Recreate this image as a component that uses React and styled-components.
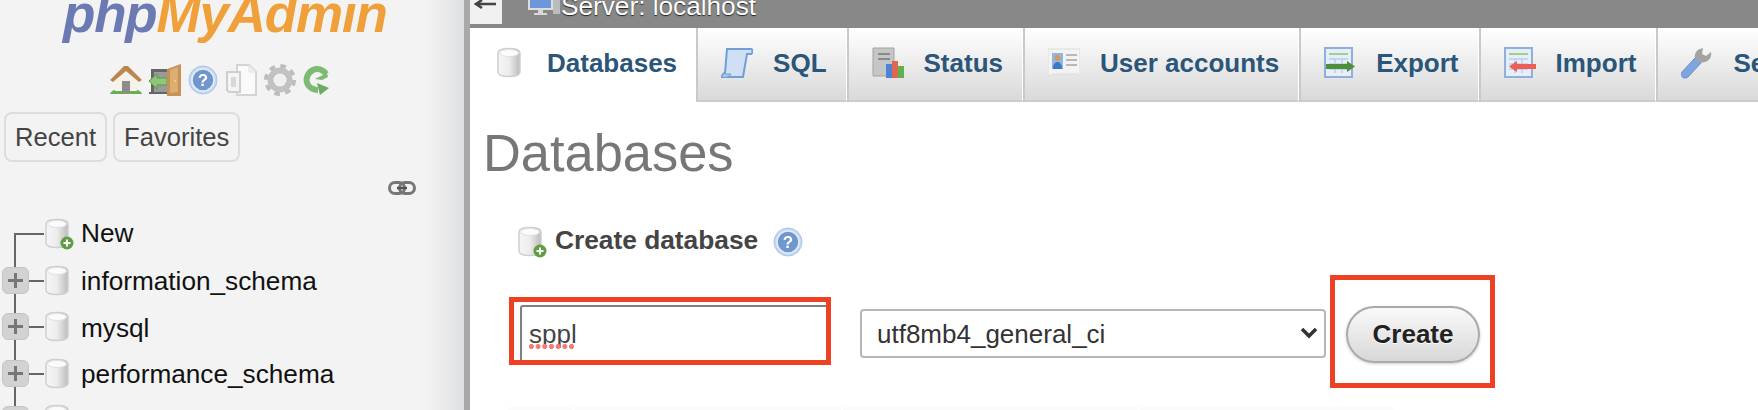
import React from 'react';
import styled, { createGlobalStyle } from 'styled-components';

const GlobalStyle = createGlobalStyle`
    html, body {
        margin: 0;
        padding: 0;
        background: #fff;
    }
    body {
        font-family: "Liberation Sans", Arial, sans-serif;
    }
    * {
        box-sizing: border-box;
    }
`;

const Page = styled.div`
    display: flex;
    width: 1758px;
    height: 410px;
    overflow: hidden;
`;

// left navigation panel
const Sidebar = styled.aside`
    flex: 0 0 470px;
    height: 410px;
    overflow: hidden;
    border-right: 6px solid #a9a9a9;
    background: linear-gradient(to right, #f3f3f3 0, #f3f3f3 425px, #dfe0e1 464px);
`;

const Logo = styled.div`
    margin: -17px 0 0 63px;
    height: 61px;
    font-size: 53px;
    line-height: 61px;
    font-style: italic;
    font-weight: 700;
    letter-spacing: -1.2px;
    white-space: nowrap;
    color: #f0a03a;
    span {
        color: #6c7ab3;
    }
`;

const IconRow = styled.div`
    display: flex;
    align-items: center;
    height: 32px;
    margin: 20px 0 0 110px;
    gap: 7px;
`;

const Blurred = styled.svg`
    display: block;
    flex: none;
    filter: blur(0.45px);
`;

const TabRow = styled.div`
    display: flex;
    gap: 6px;
    margin: 16px 0 0 4px;
`;

const NavButton = styled.div`
    height: 50px;
    padding: 0 9px;
    font-size: 25.6px;
    line-height: 46px;
    color: #444;
    border: 2px solid #ddd;
    border-radius: 8px;
`;

const LinkRow = styled.div`
    display: flex;
    justify-content: flex-end;
    margin: 19px 48px 0 0;
    height: 14px;
`;

const Tree = styled.div`
    margin-top: 16px;
`;

const TreeRow = styled.div`
    display: flex;
    align-items: center;
    height: 46.5px;
    font-size: 26.2px;
    color: #111;
`;

const Connector = styled.div`
    position: relative;
    flex: 0 0 44px;
    height: 100%;
    &::before {
        content: "";
        position: absolute;
        left: 14px;
        width: 2px;
        top: ${p => (p.$first ? '50%' : '0')};
        bottom: 0;
        background: #666;
    }
    &::after {
        content: "";
        position: absolute;
        left: 14px;
        right: 0;
        top: calc(50% - 1px);
        height: 2px;
        background: #666;
    }
`;

const PlusBox = styled.div`
    position: absolute;
    z-index: 1;
    left: 2px;
    top: 50%;
    width: 27px;
    height: 27px;
    margin-top: -14px;
    border: 1px solid #c4c4c4;
    border-radius: 6px;
    background: #d2d2d2;
    filter: blur(0.4px);
    &::before, &::after {
        content: "";
        position: absolute;
        background: #777;
    }
    &::before {
        left: 5px;
        right: 5px;
        top: 11px;
        height: 3px;
    }
    &::after {
        top: 5px;
        bottom: 5px;
        left: 11px;
        width: 3px;
    }
`;

const TreeLabel = styled.span`
    margin-left: 7px;
    position: relative;
    top: ${p => (p.$first ? '-1px' : '1px')};
`;

// right hand side
const Main = styled.main`
    position: relative;
    flex: 1;
    min-width: 0;
    height: 410px;
    overflow: hidden;
`;

const TopBar = styled.div`
    display: flex;
    height: 28px;
    background: #888;
    overflow: hidden;
`;

const BackButton = styled.div`
    display: flex;
    align-items: flex-start;
    justify-content: center;
    width: 32px;
    height: 24px;
    background: #f1f1f1;
`;

const ServerLabel = styled.div`
    display: flex;
    margin-left: 26px;
    height: 28px;
    font-size: 26.2px;
    line-height: 28px;
    color: #fff;
    text-shadow: 0 1px 1px #222;
    span {
        position: relative;
        top: -8px;
        margin-left: 1px;
    }
`;

const Tabs = styled.nav`
    display: flex;
    height: 74px;
    white-space: nowrap;
`;

const Tab = styled.div`
    display: flex;
    flex: none;
    align-items: center;
    height: 74px;
    padding: 0 ${p => (p.$active ? '18px' : '19px')} 2px 23px;
    font-size: 26px;
    font-weight: 700;
    color: #2b5579;
    border-left: 2px solid ${p => (p.$active ? '#fff' : '#c9c9c9')};
    border-right: 1px solid #fff;
    border-bottom: 2px solid ${p => (p.$active ? '#fff' : '#cbcbcb')};
    background: ${p => (p.$active ? '#fff' : 'linear-gradient(to bottom, #fff, #d9d9d9)')};
`;

const TabIcon = styled.div`
    display: flex;
    justify-content: ${p => (p.$center ? 'center' : 'flex-start')};
    width: 32px;
    margin-right: 20px;
`;

const Heading = styled.h1`
    margin: 21px 0 0 13px;
    height: 60px;
    font-size: 52.4px;
    line-height: 60px;
    font-weight: 400;
    color: #777;
`;

const Section = styled.section`
    margin: 0 0 0 47px;
    padding-top: 42px;
`;

const SectionTitle = styled.div`
    display: flex;
    align-items: center;
    height: 34px;
    font-size: 26.3px;
    font-weight: 700;
    color: #444;
`;

const TitleText = styled.span`
    margin: 0 15px 0 8px;
    position: relative;
    top: -2px;
`;

const FormRow = styled.form`
    display: flex;
    align-items: center;
    height: 59px;
    margin: 45px 0 0 3px;
`;

const InputWrap = styled.div`
    position: relative;
    flex: 0 0 309px;
    margin-right: 31px;
`;

const NameInput = styled.input`
    display: block;
    width: 100%;
    height: 58px;
    padding: 0 7px;
    font: 26px "Liberation Sans", Arial, sans-serif;
    color: #444;
    background: #fff;
    border: 0;
    border-top: 2px solid #808080;
    border-left: 2px solid #808080;
    border-radius: 3px 0 0 3px;
    outline: none;
`;

const SpellDots = styled.span`
    position: absolute;
    left: 9px;
    top: 39px;
    width: 46px;
    height: 5px;
    background: radial-gradient(circle at 2.5px 2.5px, #f77a70 2.3px, transparent 2.6px) 0 0 / 6.7px 5px repeat-x;
`;

const SelectWrap = styled.div`
    position: relative;
    flex: 0 0 466px;
    margin-right: 20px;
`;

const Collation = styled.select`
    display: block;
    width: 100%;
    height: 49px;
    padding: 0 40px 0 15px;
    font: 26px "Liberation Sans", Arial, sans-serif;
    color: #333;
    background: #fff;
    border: 2px solid #b7b7b7;
    border-radius: 4px;
    appearance: none;
`;

const Chevron = styled.svg`
    position: absolute;
    right: 8px;
    top: 18px;
    pointer-events: none;
`;

const CreateButton = styled.button`
    flex: 0 0 134px;
    height: 57px;
    margin-top: 2px;
    padding: 0;
    font: 700 26px "Liberation Sans", Arial, sans-serif;
    color: #222;
    text-shadow: 0 1px 0 #fff;
    border: 2px solid #aaa;
    border-radius: 29px;
    background: linear-gradient(to bottom, #f9f9f9, #d8d8d8);
    box-shadow: 0 1px 3px #ccc;
`;

// red annotation frames drawn on top of the screenshot
const Frame = styled.div`
    position: absolute;
    left: ${p => p.$left}px;
    top: ${p => p.$top}px;
    width: ${p => p.$width}px;
    height: ${p => p.$height}px;
    border: 5px solid #ee4023;
`;

const TableHeadRow = styled.div`
    position: absolute;
    left: 38px;
    bottom: 0;
    display: flex;
    gap: 2px;
    height: 3px;
`;

const TableHeadCell = styled.div`
    width: ${p => p.$width}px;
    background: #fbfbfb;
`;

const Gradients = () => (
    <svg width="0" height="0" style={{ position: 'absolute' }}>
        <defs>
            <linearGradient id="dbBody" x1="0" x2="1" y1="0" y2="0">
                <stop offset="0" stopColor="#f6f6f6" />
                <stop offset="0.5" stopColor="#ececec" />
                <stop offset="1" stopColor="#bcbcbc" />
            </linearGradient>
        </defs>
    </svg>
);

const DbIcon = ({ badge }) => (
    <Blurred width="30" height="32" viewBox="0 0 30 32">
        <path d="M2 6c0-3 5-4.500 11-4.500S24 3 24 6v19c0 3-5 4.500-11 4.500S2 28 2 25z" fill="url(#dbBody)" stroke="#cfcfcf" strokeWidth="1.500" />
        <ellipse cx="13" cy="6" rx="9.500" ry="3.500" fill="#fbfbfb" stroke="#e0e0e0" />
        {badge && (
            <>
                <circle cx="23" cy="25" r="6.500" fill="#5f9e45" />
                <path d="M23 21.500v7M19.500 25h7" stroke="#fff" strokeWidth="2" />
            </>
        )}
    </Blurred>
);

const HomeIcon = () => (
    <Blurred width="32" height="32" viewBox="0 0 32 32">
        <path d="M0 30c2-5 8-5 16-5s14 0 16 5z" fill="#69ad55" />
        <path d="M5 14 16 5l11 9v13H5z" fill="#f6f2ea" />
        <path d="M12 17h8v12h-8z" fill="#8c8c8c" />
        <path d="M0 16 14 2h4l14 14-3 2L16 7 3 18z" fill="#bb8550" />
    </Blurred>
);

const ExitIcon = () => (
    <Blurred width="32" height="32" viewBox="0 0 32 32">
        <path d="M2 5h18v25H0v-2h2z" fill="#666" />
        <path d="M5 8h15v20H5z" fill="#9a9a9a" />
        <path d="M0 17 8 10v4h10v7H8v4z" fill="#8cc878" stroke="#5c9a4a" />
        <path d="M18 5l14-5v32H18z" fill="#c69257" />
        <path d="M21 6l8-3v25l-8 1z" fill="#dcae73" />
        <circle cx="26" cy="17" r="1.200" fill="#f2d050" />
    </Blurred>
);

const HelpIcon = ({ size = 30 }) => (
    <Blurred width={size} height={size} viewBox="0 0 30 30">
        <circle cx="15" cy="15" r="14" fill="#c6d9f2" stroke="#a9c3e8" />
        <circle cx="15" cy="15" r="11" fill="#6f97cd" stroke="#e4edf8" strokeWidth="1.500" />
        <text x="15" y="21" textAnchor="middle" fontSize="17" fontWeight="700" fill="#fff" fontFamily="Liberation Sans">?</text>
    </Blurred>
);

const DocsIcon = () => (
    <Blurred width="32" height="32" viewBox="0 0 32 32">
        <path d="M12 1h12l7 7v23H12z" fill="#fafafa" stroke="#d4d4d4" strokeWidth="2" />
        <path d="M24 1v7h7" fill="#eee" stroke="#e2e2e2" />
        <path d="M2 8h13v20H4l-2-2z" fill="#f4f4f4" stroke="#cfcfcf" strokeWidth="2" />
        <path d="M6 13h5v10H6z" fill="#d8d8d8" />
    </Blurred>
);

const GearIcon = () => (
    <Blurred width="32" height="32" viewBox="0 0 32 32">
        <circle cx="16" cy="16" r="13" fill="none" stroke="#bdbdbd" strokeWidth="6" strokeDasharray="5.200 5" />
        <circle cx="16" cy="16" r="9.500" fill="none" stroke="#c2c2c2" strokeWidth="6" />
        <circle cx="16" cy="16" r="5" fill="#efefef" />
    </Blurred>
);

const ReloadIcon = () => (
    <Blurred width="27" height="32" viewBox="0 0 27 32">
        <path d="M23 10C20 5 14 4 10 6 4 9 2 16 5 21c3 4 7 5 10 5" fill="none" stroke="#7dbb72" strokeWidth="6" />
        <path d="M14 19l12 5-9 7z" fill="#6dab62" />
        <path d="M12 15l12-6 1 4-6 3z" fill="#7dbb72" />
    </Blurred>
);

const LinkIcon = () => (
    <Blurred width="28" height="14" viewBox="0 0 28 14">
        <rect x="1.500" y="1.500" width="15" height="11" rx="5.500" fill="none" stroke="#777" strokeWidth="3" />
        <rect x="11.500" y="1.500" width="15" height="11" rx="5.500" fill="none" stroke="#777" strokeWidth="3" />
        <path d="M9 7h10" stroke="#555" strokeWidth="2.500" />
    </Blurred>
);

const SqlIcon = () => (
    <Blurred width="32" height="32" viewBox="0 0 32 32">
        <path d="M6 2h24c2 0 2 4 0 5h-4l-4 23H1c0-3 2-4 3-4z" fill="#cfe0f6" stroke="#6f9fd8" strokeWidth="2" />
        <path d="M1 30c3 1 8 0 9-3H4" fill="#a9c6ea" stroke="#6f9fd8" />
    </Blurred>
);

const StatusIcon = () => (
    <Blurred width="32" height="32" viewBox="0 0 32 32">
        <path d="M1 1h21v28H1z" fill="#c6c6c6" stroke="#a3a3a3" />
        <path d="M6 6h12v2H6zM6 11h12v2H6z" fill="#8a8a8a" />
        <path d="M14 17h6v14h-6z" fill="#4d82d6" />
        <path d="M20 14h6v17h-6z" fill="#e0664f" />
        <path d="M26 19h6v12h-6z" fill="#5fb14c" />
    </Blurred>
);

const UserIcon = () => (
    <Blurred width="32" height="32" viewBox="0 0 32 32">
        <path d="M0 2h32v27l-3-2H5l-5 2z" fill="#f3f3f3" stroke="#ddd" />
        <path d="M4 6h11v16H4z" fill="#8fb7e6" />
        <circle cx="9.500" cy="11" r="3" fill="#d8985c" />
        <path d="M5 22c0-5 2-7 4.500-7S14 17 14 22z" fill="#3b79c3" />
        <path d="M18 7h11v2H18zM18 12h11v2H18zM18 17h11v2H18z" fill="#b8b8b8" />
    </Blurred>
);

const TableSheet = () => (
    <>
        <path d="M1 1h27v29H1z" fill="#e6eefa" stroke="#8fb0dc" strokeWidth="2" />
        <path d="M5 6h19v2H5z" fill="#a3cf8e" />
        <path d="M5 12h19M5 17h19M5 22h19M11 12v14M18 12v14" stroke="#bccfe8" strokeWidth="1.500" />
    </>
);

const ExportIcon = () => (
    <Blurred width="32" height="32" viewBox="0 0 32 32">
        <TableSheet />
        <path d="M2 17h21v-3l8 5.500-8 5.500v-3H2z" fill="#4f8f3c" />
    </Blurred>
);

const ImportIcon = () => (
    <Blurred width="32" height="32" viewBox="0 0 32 32">
        <TableSheet />
        <path d="M32 17H13v-3l-8 5.500 8 5.500v-3h19z" fill="#ea5f57" />
    </Blurred>
);

const WrenchIcon = () => (
    <Blurred width="32" height="32" viewBox="0 0 32 32">
        <path d="M3 31c-3-1-3-4-2-6l13-14 6 5L7 30c-1 1-2 1-4 1z" fill="#7ea5de" stroke="#648fcf" />
        <path d="M14 12c-1-4 1-9 5-10l3-1-1 6 4 2 5-4c1 5-2 9-6 10l-4 1z" fill="#a3a3a3" />
    </Blurred>
);

const MonitorIcon = () => (
    <Blurred width="32" height="28" viewBox="0 0 32 28" style={{ marginTop: -10 }}>
        <path d="M1 1h23v18H1z" fill="#6d97d8" stroke="#ddd" strokeWidth="2" />
        <path d="M10 19h5v4h4v2H6v-2h4z" fill="#d8d8d8" />
        <path d="M25 2h7v22h-7z" fill="#bcbcbc" />
        <path d="M27 5h3v3h-3z" fill="#63c04e" />
    </Blurred>
);

const tabs = [
    { label: 'Databases', icon: <DbIcon />, active: true, center: true },
    { label: 'SQL', icon: <SqlIcon /> },
    { label: 'Status', icon: <StatusIcon /> },
    { label: 'User accounts', icon: <UserIcon /> },
    { label: 'Export', icon: <ExportIcon /> },
    { label: 'Import', icon: <ImportIcon /> },
    { label: 'Settings', icon: <WrenchIcon /> },
];

const databases = ['information_schema', 'mysql', 'performance_schema', 'phpmyadmin'];

const App = () => {
    return (
        <Page>
            <GlobalStyle />
            <Gradients />
            <Sidebar>
                <Logo><span>php</span>MyAdmin</Logo>
                <IconRow>
                    <HomeIcon />
                    <ExitIcon />
                    <HelpIcon />
                    <DocsIcon />
                    <GearIcon />
                    <ReloadIcon />
                </IconRow>
                <TabRow>
                    <NavButton>Recent</NavButton>
                    <NavButton>Favorites</NavButton>
                </TabRow>
                <LinkRow><LinkIcon /></LinkRow>
                <Tree>
                    <TreeRow>
                        <Connector $first />
                        <DbIcon badge />
                        <TreeLabel $first>New</TreeLabel>
                    </TreeRow>
                    {databases.map(name => (
                        <TreeRow key={name}>
                            <Connector><PlusBox /></Connector>
                            <DbIcon />
                            <TreeLabel>{name}</TreeLabel>
                        </TreeRow>
                    ))}
                </Tree>
            </Sidebar>
            <Main>
                <TopBar>
                    <BackButton>
                        <svg width="24" height="14" viewBox="0 0 24 14">
                            <path d="M2 4h20M8 0 2 4l6 4" fill="none" stroke="#444" strokeWidth="2.500" />
                        </svg>
                    </BackButton>
                    <ServerLabel>
                        <MonitorIcon />
                        <span>Server: localhost</span>
                    </ServerLabel>
                </TopBar>
                <Tabs>
                    {tabs.map(t => (
                        <Tab key={t.label} $active={t.active}>
                            <TabIcon $center={t.center}>{t.icon}</TabIcon>
                            {t.label}
                        </Tab>
                    ))}
                </Tabs>
                <Heading>Databases</Heading>
                <Section>
                    <SectionTitle>
                        <DbIcon badge />
                        <TitleText>Create database</TitleText>
                        <HelpIcon />
                    </SectionTitle>
                    <FormRow>
                        <InputWrap>
                            <NameInput defaultValue="sppl" spellCheck={false} />
                            <SpellDots />
                        </InputWrap>
                        <SelectWrap>
                            <Collation defaultValue="utf8mb4_general_ci">
                                <option>utf8mb4_general_ci</option>
                            </Collation>
                            <Chevron width="18" height="12" viewBox="0 0 18 12">
                                <path d="M2 2l7 7 7-7" fill="none" stroke="#333" strokeWidth="3.500" />
                            </Chevron>
                        </SelectWrap>
                        <CreateButton type="button">Create</CreateButton>
                    </FormRow>
                </Section>
                <TableHeadRow>
                    <TableHeadCell $width={64} />
                    <TableHeadCell $width={267} />
                    <TableHeadCell $width={295} />
                    <TableHeadCell $width={253} />
                </TableHeadRow>
                <Frame $left={39} $top={297} $width={322} $height={68} />
                <Frame $left={860} $top={275} $width={165} $height={113} />
            </Main>
        </Page>
    );
};

export default App;
